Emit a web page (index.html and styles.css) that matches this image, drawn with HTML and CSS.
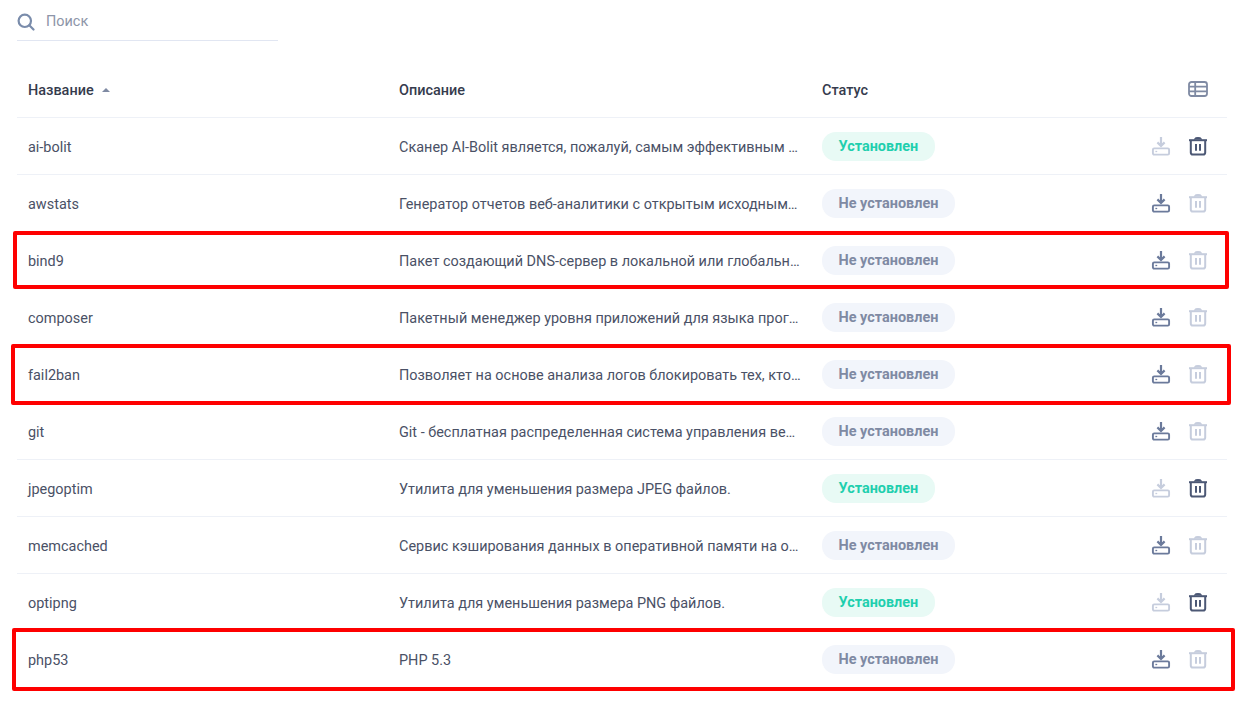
FILE: index.html
```html
<!DOCTYPE html>
<html lang="ru">
  <head>
    <meta charset="UTF-8" />
    <title>Пакеты</title>
    <link rel="stylesheet" href="styles.css">
  </head>
  <body>
    <svg class="defs" width="0" height="0">
      <symbol id="i-down" viewBox="0 0 20 20">
        <path d="M10 1v9M6.400 6.400 10 10l3.600-3.600" fill="none" stroke="currentColor" stroke-width="2.200"/>
        <rect x="1.900" y="12.400" width="16.200" height="6.200" rx="1.300" fill="none" stroke="currentColor" stroke-width="1.900"/>
        <path d="M4.400 15.500h1.800" stroke="currentColor" stroke-width="1.300"/>
      </symbol>
      <symbol id="i-trash" viewBox="0 0 20 20">
        <path d="M1 4.200h18" stroke="currentColor" stroke-width="2"/>
        <path d="M6.500 3.600c.3-1.400 1-2 2-2h3c1 0 1.700.6 2 2" fill="currentColor" stroke="currentColor" stroke-width="1"/>
        <path d="M2.800 4.500v12c0 1.300.8 2.100 2.100 2.100h10.200c1.300 0 2.100-.8 2.100-2.100v-12" fill="none" stroke="currentColor" stroke-width="2"/>
        <path d="M8 8v6.800M12 8v6.800" stroke="currentColor" stroke-width="2"/>
      </symbol>
    </svg>

    <div class="page">
      <div class="search">
        <svg class="search-icon" width="18" height="18" viewBox="0 0 18 18">
          <circle cx="7.800" cy="7.800" r="6.200" fill="none" stroke="currentColor" stroke-width="2.200"/>
          <path d="M12.300 12.300 16.500 16.500" stroke="currentColor" stroke-width="2.200" stroke-linecap="round"/>
        </svg>
        <span>Поиск</span>
      </div>

      <div class="row head">
        <div class="name">Название <i class="sort"></i></div>
        <div class="desc">Описание</div>
        <div class="desc">Статус</div>
        <div class="actions">
          <svg class="table-icon" width="20" height="16" viewBox="0 0 20 16">
            <rect x="1" y="1" width="18" height="14" rx="2.500" fill="none" stroke="currentColor" stroke-width="1.800"/>
            <path d="M1 5.700h18M1 10.300h18M7.200 1v14" stroke="currentColor" stroke-width="1.800"/>
          </svg>
        </div>
      </div>

      <div class="row">
        <div class="name">ai-bolit</div>
        <div class="desc"><span>Сканер AI-Bolit является, пожалуй, самым эффективным средством поиска вирусов</span></div>
        <div><span class="badge on">Установлен</span></div>
        <div class="actions"><svg class="ic off"><use href="#i-down"/></svg><svg class="ic dark"><use href="#i-trash"/></svg></div>
      </div>
      <div class="row">
        <div class="name">awstats</div>
        <div class="desc"><span>Генератор отчетов веб-аналитики с открытым исходным кодом для серверов</span></div>
        <div><span class="badge">Не установлен</span></div>
        <div class="actions"><svg class="ic"><use href="#i-down"/></svg><svg class="ic off"><use href="#i-trash"/></svg></div>
      </div>
      <div class="row">
        <div class="name">bind9</div>
        <div class="desc"><span>Пакет создающий DNS-сервер в локальной или глобальной сети интернет</span></div>
        <div><span class="badge">Не установлен</span></div>
        <div class="actions"><svg class="ic"><use href="#i-down"/></svg><svg class="ic off"><use href="#i-trash"/></svg></div>
      </div>
      <div class="row">
        <div class="name">composer</div>
        <div class="desc"><span>Пакетный менеджер уровня приложений для языка программирования PHP</span></div>
        <div><span class="badge">Не установлен</span></div>
        <div class="actions"><svg class="ic"><use href="#i-down"/></svg><svg class="ic off"><use href="#i-trash"/></svg></div>
      </div>
      <div class="row">
        <div class="name">fail2ban</div>
        <div class="desc"><span>Позволяет на основе анализа логов блокировать тех, кто пытается подобрать пароль</span></div>
        <div><span class="badge">Не установлен</span></div>
        <div class="actions"><svg class="ic"><use href="#i-down"/></svg><svg class="ic off"><use href="#i-trash"/></svg></div>
      </div>
      <div class="row">
        <div class="name">git</div>
        <div class="desc"><span>Git - бесплатная распределенная система управления версиями файлов</span></div>
        <div><span class="badge">Не установлен</span></div>
        <div class="actions"><svg class="ic"><use href="#i-down"/></svg><svg class="ic off"><use href="#i-trash"/></svg></div>
      </div>
      <div class="row">
        <div class="name">jpegoptim</div>
        <div class="desc"><span>Утилита для уменьшения размера JPEG файлов.</span></div>
        <div><span class="badge on">Установлен</span></div>
        <div class="actions"><svg class="ic off"><use href="#i-down"/></svg><svg class="ic dark"><use href="#i-trash"/></svg></div>
      </div>
      <div class="row">
        <div class="name">memcached</div>
        <div class="desc"><span>Сервис кэширования данных в оперативной памяти на основе хеш-таблицы</span></div>
        <div><span class="badge">Не установлен</span></div>
        <div class="actions"><svg class="ic"><use href="#i-down"/></svg><svg class="ic off"><use href="#i-trash"/></svg></div>
      </div>
      <div class="row">
        <div class="name">optipng</div>
        <div class="desc"><span>Утилита для уменьшения размера PNG файлов.</span></div>
        <div><span class="badge on">Установлен</span></div>
        <div class="actions"><svg class="ic off"><use href="#i-down"/></svg><svg class="ic dark"><use href="#i-trash"/></svg></div>
      </div>
      <div class="row">
        <div class="name">php53</div>
        <div class="desc"><span>PHP 5.3</span></div>
        <div><span class="badge">Не установлен</span></div>
        <div class="actions"><svg class="ic"><use href="#i-down"/></svg><svg class="ic off"><use href="#i-trash"/></svg></div>
      </div>
    </div>

    <div class="mark mark-1"></div>
    <div class="mark mark-2"></div>
    <div class="mark mark-3"></div>
  </body>
</html>
```

FILE: styles.css
```css
* {
  margin: 0;
  padding: 0;
  box-sizing: border-box;
}
body {
  background: #fff;
  color: #4a5166;
  font-family: Roboto, "Noto Sans", sans-serif;
  font-size: 14.45px;
  overflow: hidden;
}
.defs {
  position: absolute;
}
.page {
  width: 1227px;
  padding-left: 17px;
}
.search {
  display: flex;
  align-items: center;
  gap: 11px;
  width: 261px;
  height: 41px;
  margin-bottom: 20px;
  padding-top: 3px;
  border-bottom: 1px solid #e1e6f2;
  color: #8d95a8;
}
.search-icon {
  color: #7a8cab;
}
.row {
  display: grid;
  grid-template-columns: 371px 423px 1fr 90px;
  align-items: center;
  height: 57px;
  padding-left: 11px;
  padding-right: 19px;
  border-bottom: 1px solid #eef1f7;
}
.name,
.desc {
  padding-top: 2px;
}
.head {
  color: #353b4d;
  font-weight: 500;
}
.sort {
  display: inline-block;
  margin: 0 0 2px 5px;
  border: 4px solid transparent;
  border-top: 0;
  border-bottom: 4px solid #7f8aa3;
  vertical-align: middle;
}
.desc span {
  display: block;
  max-width: 402px;
  white-space: nowrap;
  overflow: hidden;
  text-overflow: ellipsis;
}
.badge {
  display: inline-block;
  height: 29px;
  padding: 0 16.5px;
  border-radius: 14px;
  background: #f2f5fb;
  color: #7f8aa3;
  font-weight: 700;
  line-height: 30px;
}
.badge.on {
  background: #e8faf5;
  color: #1fcfae;
}
.actions {
  display: flex;
  justify-content: flex-end;
  align-items: center;
  gap: 17px;
}
.table-icon {
  color: #7f8aa3;
}
.ic {
  width: 20px;
  height: 20px;
  color: #6b7a9b;
}
.ic.off {
  color: #c6cddd;
}
.ic.dark {
  color: #4c5875;
}
.mark {
  position: absolute;
  border: 4px solid #fe0000;
  border-radius: 2px;
}
.mark-1 {
  left: 13px;
  top: 231px;
  width: 1216px;
  height: 58px;
}
.mark-2 {
  left: 11px;
  top: 344px;
  width: 1220px;
  height: 61px;
}
.mark-3 {
  left: 12px;
  top: 628px;
  width: 1223px;
  height: 63px;
}
```
